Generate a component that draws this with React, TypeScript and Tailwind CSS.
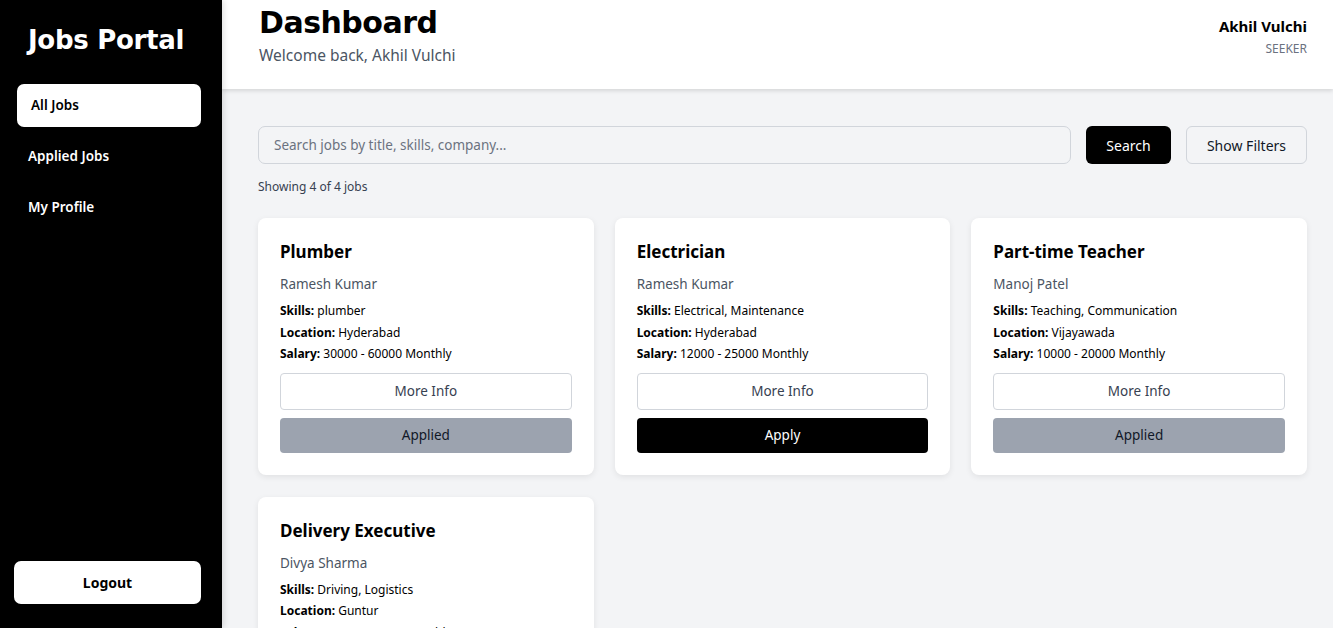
import React from "react";

const jobs = [
  { title: "Plumber", company: "Ramesh Kumar", skills: "plumber", location: "Hyderabad", salary: "30000 - 60000 Monthly", applied: true },
  { title: "Electrician", company: "Ramesh Kumar", skills: "Electrical, Maintenance", location: "Hyderabad", salary: "12000 - 25000 Monthly", applied: false },
  { title: "Part-time Teacher", company: "Manoj Patel", skills: "Teaching, Communication", location: "Vijayawada", salary: "10000 - 20000 Monthly", applied: true },
  { title: "Delivery Executive", company: "Divya Sharma", skills: "Driving, Logistics", location: "Guntur", salary: "15000 - 22000 Monthly", applied: false },
];

const body = { fontFamily: '"Noto Sans", "Open Sans", sans-serif' };
const heavy = { fontFamily: '"DejaVu Sans", Verdana, sans-serif' };

function JobCard({ job }: { job: (typeof jobs)[number] }) {
  return (
    <div className="bg-white rounded-lg shadow-[0_2px_6px_rgba(0,0,0,0.08)] px-[22px] pt-[22px] pb-[22px] flex flex-col">
      <h3 className="text-[17px] font-bold text-black leading-[24px]">{job.title}</h3>
      <div className="text-[13.5px] text-[#4b5563] mt-[10px] leading-[20px]">{job.company}</div>
      <div className="mt-[6px] text-[12px] text-black leading-[21.5px]">
        <div><span className="font-bold">Skills:</span> {job.skills}</div>
        <div><span className="font-bold">Location:</span> {job.location}</div>
        <div><span className="font-bold">Salary:</span> {job.salary}</div>
      </div>
      <button className="mt-[8px] h-[37px] w-full border border-[#d1d5db] rounded-[4px] bg-white text-[13.5px] text-[#374151]">
        More Info
      </button>
      <button
        className={
          job.applied
            ? "mt-[8px] h-[35px] w-full rounded-[4px] bg-[#9ca3af] text-[13.5px] text-[#111827]"
            : "mt-[8px] h-[35px] w-full rounded-[4px] bg-black text-[13.5px] text-white"
        }
      >
        {job.applied ? "Applied" : "Apply"}
      </button>
    </div>
  );
}

export default function App() {
  return (
    <div className="flex h-[628px] overflow-hidden bg-[#f3f4f6]" style={body}>
      <aside className="w-[222px] shrink-0 bg-black flex flex-col justify-between pl-[14px] pr-[21px] pb-[24px] relative z-10 shadow-[2px_0_6px_rgba(0,0,0,0.12)]">
        <div>
          <h1 className="text-white text-[26px] font-bold pl-[14px] pt-[22px] leading-[36px] tracking-[-0.3px]" style={heavy}>
            Jobs Portal
          </h1>
          <nav className="mt-[26px] flex flex-col gap-[8px]">
            <div className="ml-[3px] h-[43px] bg-white rounded-[7px] flex items-center pl-[14px] text-[13.5px] font-semibold text-black">
              All Jobs
            </div>
            <div className="h-[43px] flex items-center pl-[14px] text-[13.5px] font-semibold text-white">
              Applied Jobs
            </div>
            <div className="h-[43px] flex items-center pl-[14px] text-[13.5px] font-semibold text-white">
              My Profile
            </div>
          </nav>
        </div>
        <button className="h-[43px] bg-white rounded-[7px] text-[14px] font-bold text-black">
          Logout
        </button>
      </aside>
      <div className="flex-1 flex flex-col min-w-0">
        <header className="h-[89px] shrink-0 bg-white shadow-[0_2px_4px_rgba(0,0,0,0.12)] flex justify-between pl-[37px] pr-[26px] relative">
          <div className="pt-[4px]">
            <h2 className="text-[30px] font-bold text-black leading-[38px] tracking-[-0.5px]" style={heavy}>Dashboard</h2>
            <div className="text-[15.5px] text-[#4b5563] mt-[2px] leading-[22px]">Welcome back, Akhil Vulchi</div>
          </div>
          <div className="pt-[16px] text-right">
            <div className="text-[15px] font-bold text-black leading-[20px]">Akhil Vulchi</div>
            <div className="text-[12px] text-[#6b7280] mt-[5px] leading-[16px]">SEEKER</div>
          </div>
        </header>
        <main className="flex-1 pl-[36px] pr-[26px] pt-[37px]">
          <div className="flex gap-[15px] h-[38px]">
            <input
              className="flex-1 h-[38px] rounded-[7px] border border-[#d1d5db] bg-transparent px-[15px] text-[13.5px] placeholder:text-[#6b7280] outline-none"
              placeholder="Search jobs by title, skills, company..."
            />
            <button className="w-[85px] h-[38px] bg-black text-white rounded-[6px] text-[14px]">Search</button>
            <button className="w-[121px] h-[38px] border border-[#d1d5db] rounded-[6px] text-[14px] text-[#111827] bg-[#f3f4f6]">
              Show Filters
            </button>
          </div>
          <div className="mt-[15px] text-[12px] text-[#374151] leading-[16px]">Showing 4 of 4 jobs</div>
          <div className="mt-[23px] grid grid-cols-3 gap-x-[21px] gap-y-[22px]">
            {jobs.map((j) => (
              <JobCard key={j.title} job={j} />
            ))}
          </div>
        </main>
      </div>
    </div>
  );
}
